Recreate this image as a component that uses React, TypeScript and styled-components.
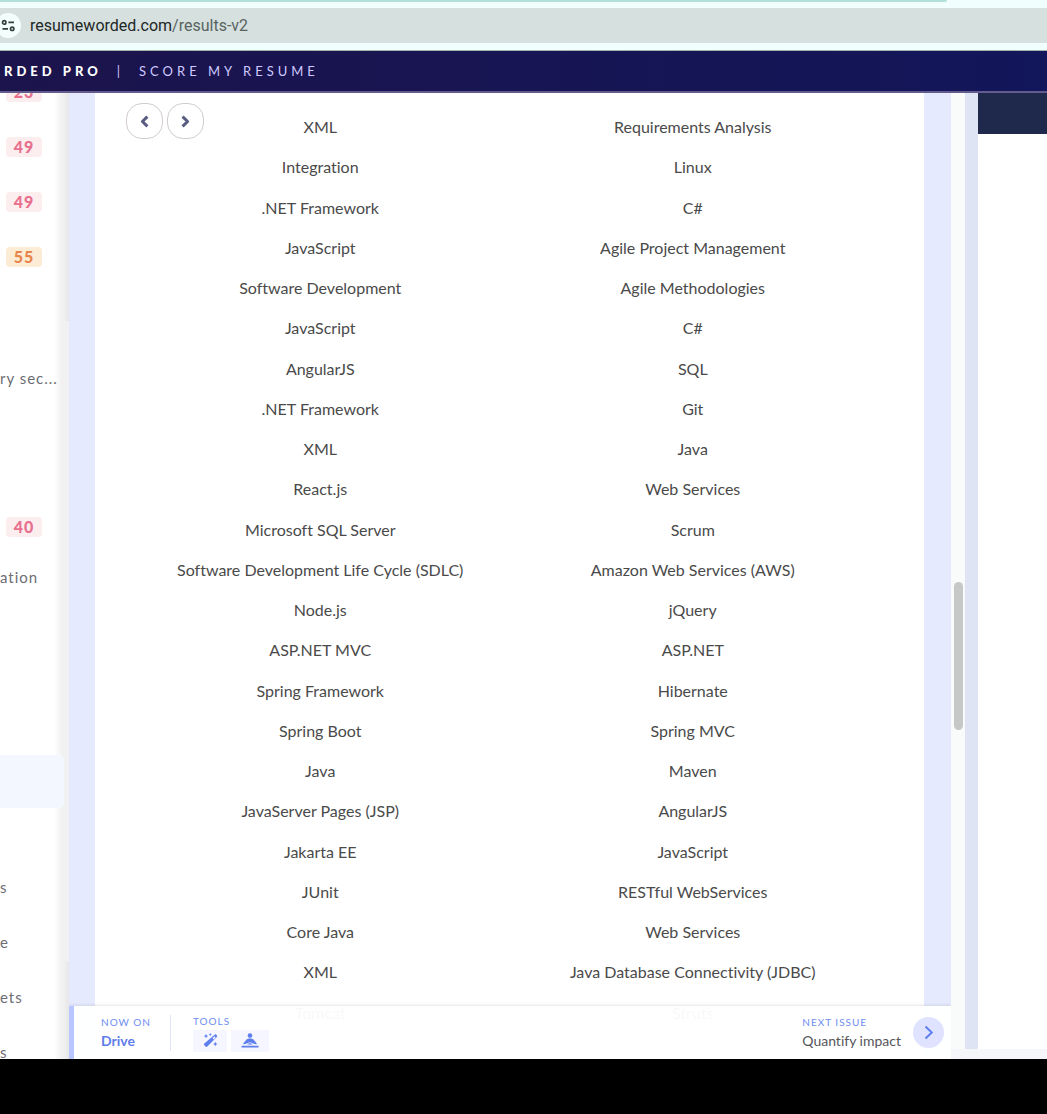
import React from "react";
import styled, { createGlobalStyle, css } from "styled-components";

const GlobalStyle = createGlobalStyle`
  * { box-sizing: border-box; }
  body {
    margin: 0;
    background: #000;
    color: #4a4a4a;
    font-family: Lato, "Liberation Sans", sans-serif;
    font-variant-ligatures: none;
  }
  button { font: inherit; padding: 0; cursor: pointer; }
  ul { list-style: none; margin: 0; padding: 0; }
`;

const Screen = styled.div`
  height: 100vh;
  display: flex;
  flex-direction: column;
  padding-bottom: 55px;
  overflow: hidden;
`;

const BrowserBar = styled.div`
  flex: none;
  height: 51px;
  background: #f0fffd;
  border-bottom: 1px solid #a3b3ae;
`;

const TabEdge = styled.div`
  height: 2px;
  margin: 0 100px 6px 0;
  background: #b3e0db;
  border-radius: 0 0 4px 0;
`;

const AddressBar = styled.div`
  height: 35px;
  display: flex;
  align-items: center;
  gap: 9px;
  background: #d5e0df;
`;

const SiteButton = styled.button`
  width: 25px;
  height: 25px;
  margin-left: -4px;
  border: 0;
  border-radius: 50%;
  background: #f3fffd;
  display: grid;
  place-items: center;
`;

const Address = styled.span`
  font: 16px/20px Roboto, sans-serif;
  color: #59645f;
  b { font-weight: 400; color: #1e2725; }
`;

const Header = styled.header`
  flex: none;
  height: 42px;
  display: flex;
  align-items: center;
  gap: 15px;
  padding-left: 4px;
  background: linear-gradient(90deg, #1c144c, #12165a);
  border-bottom: 2px solid #635a8d;
  font-size: 13px;
  line-height: 20px;
  letter-spacing: 4px;
  color: #cfc8ff;
  white-space: nowrap;
`;

const Brand = styled.strong`
  font-weight: 900;
  color: #fff;
`;

const Workspace = styled.div`
  flex: 1;
  min-height: 0;
  display: flex;
  background: #fff;
`;

const Sidebar = styled.nav`
  position: relative;
  flex: none;
  width: 69px;
  overflow: hidden;
  background:
    linear-gradient(90deg, #00000000, #0000000a) right 0 top 0 / 6px 228px no-repeat,
    linear-gradient(90deg, #00000000, #0000000a) right 0 bottom 0 / 6px 98px no-repeat,
    linear-gradient(90deg, #fff 54px, #f1f1f1 62px);
`;

const Group = styled.ul<{ $before: number }>`
  margin-top: ${(p) => p.$before}px;
`;

const Item = styled.li<{ $compact?: boolean; $active?: boolean }>`
  height: ${(p) => (p.$compact ? 50 : 55)}px;
  display: flex;
  align-items: center;
  font-size: 15px;
  letter-spacing: 1px;
  color: #6d6d74;
  white-space: nowrap;
  ${(p) =>
    p.$active &&
    css`
      height: 53px;
      margin-right: 5px;
      background: #f3f7ff;
      border-radius: 0 5px 5px 0;
    `}
`;

const Badge = styled.span<{ $warm?: boolean }>`
  width: 36px;
  margin-left: 6px;
  border-radius: 4px;
  text-align: center;
  font-size: 16px;
  line-height: 20px;
  font-weight: 900;
  color: ${(p) => (p.$warm ? "#e8854a" : "#e8708f")};
  background: ${(p) => (p.$warm ? "#fcecd6" : "#fceeee")};
`;

const Center = styled.main`
  position: relative;
  flex: 1;
  min-width: 0;
  padding: 0 27px 0 26px;
  background: #e6eafe;
  overflow: hidden;
`;

const Card = styled.section`
  position: relative;
  height: 100%;
  padding: 14px 45px 0 39px;
  background: #fff;
  overflow: hidden;
`;

const Pager = styled.div`
  position: absolute;
  top: 10px;
  left: 31px;
  display: flex;
  gap: 4px;
`;

const PagerButton = styled.button`
  width: 37px;
  height: 36px;
  display: grid;
  place-items: center;
  border: 1px solid #d3cccf;
  border-radius: 16px;
  background: #fff;
  color: #575c80;
`;

const SkillTable = styled.table`
  width: 100%;
  table-layout: fixed;
  border-collapse: collapse;
  font-size: 16px;
  line-height: 20px;
  text-align: center;
  td { height: 40px; padding: 0; }
  tr:nth-child(4n + 3) td { height: 41px; }
`;

const ActionBar = styled.footer`
  position: absolute;
  left: 0;
  right: 0;
  bottom: 0;
  height: 53px;
  display: flex;
  align-items: center;
  padding-right: 7px;
  border-left: 5px solid #b9c6ff;
  background: #fffffff6;
  box-shadow: 0 -1px 3px #0000001a;
`;

const Stack = styled.div`
  display: flex;
  flex-direction: column;
  gap: 2px;
`;

const NowOn = styled(Stack)`
  width: 97px;
  padding-left: 27px;
  border-right: 1px solid #dfe4fb;
`;

const Tools = styled(Stack)`
  padding-left: 22px;
`;

const NextIssue = styled(Stack)`
  margin-left: auto;
`;

const Caption = styled.span`
  font-size: 10px;
  line-height: 14px;
  letter-spacing: 1px;
  color: #6f8df0;
`;

const Current = styled.strong`
  font-size: 14px;
  line-height: 20px;
  color: #5f7dea;
`;

const IssueName = styled.span`
  font-size: 14px;
  line-height: 20px;
  color: #55555a;
`;

const ToolRow = styled.div`
  display: flex;
  gap: 4px;
`;

const ToolButton = styled.button<{ $wide?: boolean }>`
  width: ${(p) => (p.$wide ? 38 : 34)}px;
  height: 22px;
  display: grid;
  place-items: center;
  border: 0;
  background: #f5f6ff;
  color: #5f7fee;
`;

const NextButton = styled.button`
  width: 31px;
  height: 31px;
  margin-left: 12px;
  display: grid;
  place-items: center;
  border: 0;
  border-radius: 50%;
  background: #dfe3ff;
  color: #5f7fee;
`;

const Outer = styled.div`
  flex: none;
  width: 96px;
  display: flex;
  flex-direction: column;
  border-bottom: 10px solid #f5f6f9;
`;

const OuterRow = styled.div`
  flex: 1;
  display: flex;
`;

const ScrollTrack = styled.div`
  width: 14px;
  display: flex;
  flex-direction: column;
  align-items: center;
  padding-top: 489px;
  background: #f9fbfb;
`;

const ScrollThumb = styled.div`
  width: 9px;
  height: 148px;
  border-radius: 5px;
  background: #c5c8c7;
`;

const Divider = styled.div`
  width: 13px;
  background: #dee4f3;
`;

const Preview = styled.aside`
  flex: 1;
  background: #fff;
`;

const PreviewHeader = styled.div`
  height: 41px;
  background: #1e294b;
`;

const skills = [
  ["XML", "Requirements Analysis"],
  ["Integration", "Linux"],
  [".NET Framework", "C#"],
  ["JavaScript", "Agile Project Management"],
  ["Software Development", "Agile Methodologies"],
  ["JavaScript", "C#"],
  ["AngularJS", "SQL"],
  [".NET Framework", "Git"],
  ["XML", "Java"],
  ["React.js", "Web Services"],
  ["Microsoft SQL Server", "Scrum"],
  ["Software Development Life Cycle (SDLC)", "Amazon Web Services (AWS)"],
  ["Node.js", "jQuery"],
  ["ASP.NET MVC", "ASP.NET"],
  ["Spring Framework", "Hibernate"],
  ["Spring Boot", "Spring MVC"],
  ["Java", "Maven"],
  ["JavaServer Pages (JSP)", "AngularJS"],
  ["Jakarta EE", "JavaScript"],
  ["JUnit", "RESTful WebServices"],
  ["Core Java", "Web Services"],
  ["XML", "Java Database Connectivity (JDBC)"],
  ["Tomcat", "Struts"],
];

const TuneIcon = () => (
  <svg width="15" height="15" viewBox="0 0 15 15" fill="none" stroke="#33403d" strokeWidth="1.7" aria-hidden="true">
    <circle cx="3.2" cy="4.400" r="1.700" />
    <path d="M7.400 4.400H13M1.500 10.800H7" />
    <circle cx="11.200" cy="10.800" r="1.700" />
  </svg>
);

const Chevron = ({ flip }: { flip?: boolean }) => (
  <svg width="9" height="13" viewBox="0 0 9 13" fill="none" stroke="currentColor" strokeWidth="3" strokeLinejoin="round" aria-hidden="true">
    <path d={flip ? "M1.600 1.600 6.600 6.500 1.600 11.400" : "M7.400 1.600 2.400 6.500 7.400 11.400"} />
  </svg>
);

const WandIcon = () => (
  <svg width="15" height="15" viewBox="0 0 15 15" fill="currentColor" aria-hidden="true">
    <path d="M11.600 1.800a1.300 1.300 0 0 1 1.800 0l.4.4a1.300 1.300 0 0 1 0 1.800L4.300 13.500a1.300 1.300 0 0 1-1.800 0L1.300 12.300a1.300 1.300 0 0 1 0-1.800zM9.500 5.300l1.100 1.100 2-2-1.100-1.100z" fillRule="evenodd" />
    <path d="M3 .8l.7 1.600 1.600.7-1.600.7L3 5.400l-.7-1.600L.7 3.100l1.600-.7zM7.300 0l.5 1.100 1.100.5-1.100.5-.5 1.100-.5-1.100-1.100-.5 1.100-.5zM12.300 8.800l.7 1.500 1.500.7-1.500.7-.7 1.500-.7-1.500-1.500-.7 1.500-.7z" />
  </svg>
);

const PersonIcon = () => (
  <svg width="18" height="15" viewBox="0 0 18 15" fill="currentColor" aria-hidden="true">
    <circle cx="9" cy="2.600" r="2.300" />
    <path d="M9 5.500c1.800 0 3.200.5 3.900 1.500l2.700 3.200c.4.6-.1 1.300-.8 1.100l-2.500-.7L9.700 9.400H8.300l-2.600 1.200-2.500.7c-.7.2-1.200-.5-.8-1.100L5.100 7C5.800 6 7.200 5.500 9 5.500z" />
    <path d="M6.500 10.900 9 9.900l2.500 1v.7h-5zM.5 12.800h17v1.700H.5z" />
  </svg>
);

const NextIcon = () => (
  <svg width="10" height="15" viewBox="0 0 10 15" fill="none" stroke="currentColor" strokeWidth="2" aria-hidden="true">
    <path d="M1.500 1.500 7.800 7.500 1.500 13.500" />
  </svg>
);

export default function App() {
  return (
    <>
      <GlobalStyle />
      <Screen>
        <BrowserBar>
          <TabEdge />
          <AddressBar>
            <SiteButton aria-label="Site information"><TuneIcon /></SiteButton>
            <Address><b>resumeworded.com</b>/results-v2</Address>
          </AddressBar>
        </BrowserBar>
        <Header>
          <Brand>RDED PRO</Brand>
          <span>|</span>
          <span>SCORE MY RESUME</span>
        </Header>
        <Workspace>
          <Sidebar>
            <Group $before={-29}>
              <Item><Badge>23</Badge></Item>
              <Item><Badge>49</Badge></Item>
              <Item><Badge>49</Badge></Item>
              <Item><Badge $warm>55</Badge></Item>
            </Group>
            <Group $before={66}>
              <Item>ry sec...</Item>
            </Group>
            <Group $before={97}>
              <Item $compact><Badge>40</Badge></Item>
              <Item $compact>ation</Item>
            </Group>
            <Group $before={153}>
              <Item $active />
            </Group>
            <Group $before={51}>
              <Item>s</Item>
              <Item>e</Item>
              <Item>ets</Item>
              <Item>s</Item>
            </Group>
          </Sidebar>
          <Center>
            <Card>
              <SkillTable>
                <tbody>
                  {skills.map(([left, right], i) => (
                    <tr key={i}><td>{left}</td><td>{right}</td></tr>
                  ))}
                </tbody>
              </SkillTable>
              <Pager>
                <PagerButton aria-label="Previous"><Chevron /></PagerButton>
                <PagerButton aria-label="Next"><Chevron flip /></PagerButton>
              </Pager>
            </Card>
            <ActionBar>
              <NowOn>
                <Caption>NOW ON</Caption>
                <Current>Drive</Current>
              </NowOn>
              <Tools>
                <Caption>TOOLS</Caption>
                <ToolRow>
                  <ToolButton aria-label="Magic write"><WandIcon /></ToolButton>
                  <ToolButton $wide aria-label="Samples"><PersonIcon /></ToolButton>
                </ToolRow>
              </Tools>
              <NextIssue>
                <Caption>NEXT ISSUE</Caption>
                <IssueName>Quantify impact</IssueName>
              </NextIssue>
              <NextButton aria-label="Next issue"><NextIcon /></NextButton>
            </ActionBar>
          </Center>
          <Outer>
            <OuterRow>
              <ScrollTrack><ScrollThumb /></ScrollTrack>
              <Divider />
              <Preview><PreviewHeader /></Preview>
            </OuterRow>
          </Outer>
        </Workspace>
      </Screen>
    </>
  );
}
